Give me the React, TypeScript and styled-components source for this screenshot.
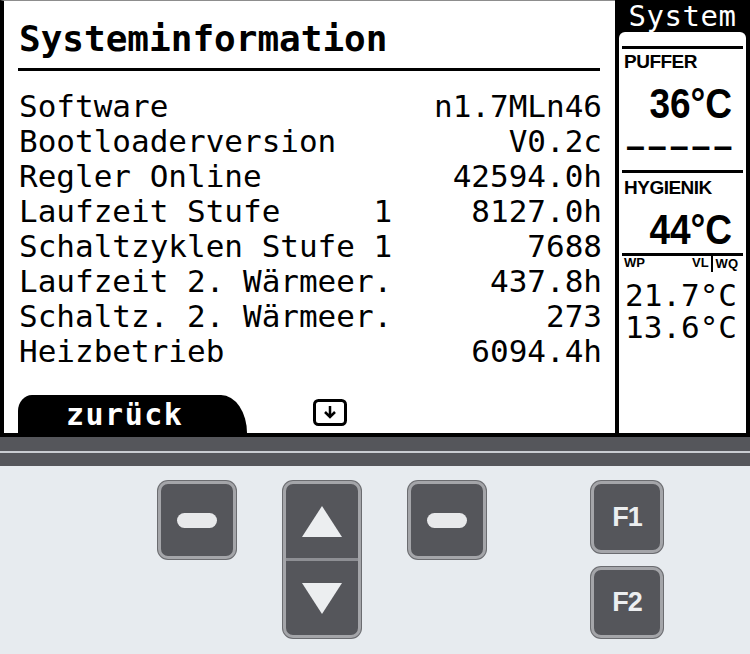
import React from 'react';
import styled, { createGlobalStyle } from 'styled-components';

const GlobalStyle = createGlobalStyle`
  *, *::before, *::after { box-sizing: border-box; }
  html, body { margin: 0; padding: 0; background: #e7ebef; }
  body { font-family: "DejaVu Sans Mono", monospace; }
`;

const Device = styled.div`
  width: 750px;
  height: 654px;
  display: flex;
  flex-direction: column;
  overflow: hidden;
`;

const Screen = styled.div`
  height: 437px;
  display: flex;
  background: #000;
`;

const MainPanel = styled.div`
  flex: 1;
  display: flex;
  flex-direction: column;
  background: #fff;
  color: #000;
  border-top: 1px solid #8d8d8d;
  border-left: 4px solid #000;
  border-bottom: 4px solid #000;
  padding: 20px 13px 0 15px;
`;

const Title = styled.h1`
  margin: 0;
  font: bold 36px/36px "DejaVu Sans Mono", monospace;
`;

const TitleRule = styled.div`
  height: 3px;
  background: #000;
  margin: 11px 2px 18px -1px;
`;

const InfoList = styled.div`
  display: flex;
  flex-direction: column;
`;

const InfoRow = styled.div`
  height: 35px;
  display: flex;
  justify-content: space-between;
  font: 31px/35px "DejaVu Sans Mono", monospace;
  white-space: pre;
`;

const Footer = styled.div`
  margin-top: auto;
  height: 38px;
  display: flex;
  align-items: flex-end;
`;

const BackTab = styled.div`
  width: 229px;
  height: 38px;
  margin-left: -1px;
  padding-left: 48px;
  background: #000;
  color: #fff;
  border-radius: 14px 26px 0 0 / 16px 38px 0 0;
  font: bold 30px/40px "DejaVu Sans Mono", monospace;
  letter-spacing: 1.5px;
`;

const ScrollHint = styled.svg`
  margin: 0 0 6px 66px;
`;

const SidePanel = styled.div`
  width: 135px;
  display: flex;
  flex-direction: column;
  background: #000;
  border-left: 4px solid #000;
  border-right: 4px solid #000;
  border-bottom: 4px solid #000;
`;

const SideHeader = styled.div`
  height: 32px;
  color: #fff;
  text-align: center;
  font: 29px/32px "DejaVu Sans Mono", monospace;
  letter-spacing: 0.5px;
  overflow: hidden;
`;

const SideBody = styled.div`
  flex: 1;
  display: flex;
  flex-direction: column;
  background: #fff;
  color: #000;
  border-radius: 6px 6px 0 0;
  padding: 14px 3px 0;
`;

const SideRule = styled.div<{ $gap: number }>`
  height: 3px;
  background: #000;
  margin-top: ${p => p.$gap}px;
`;

const SensorLabel = styled.div<{ $gap: number }>`
  margin-top: ${p => p.$gap}px;
  padding-left: 2px;
  font: bold 19px/19px "Liberation Sans", sans-serif;
  letter-spacing: -0.5px;
`;

const BigValue = styled.div`
  height: 40px;
  margin-top: 12px;
  padding-right: 11px;
  text-align: right;
  font: bold 43px/40px "Liberation Sans", sans-serif;
`;

const Condensed = styled.span`
  display: inline-block;
  transform: scaleX(0.86);
  transform-origin: right center;
`;

const Dashes = styled.div`
  height: 30px;
  margin-top: 9px;
  padding-left: 5px;
  font: bold 28px/30px "DejaVu Sans Mono", monospace;
  letter-spacing: 5px;
  white-space: nowrap;
`;

const SmallLabels = styled.div`
  height: 14px;
  display: flex;
  align-items: flex-start;
  padding: 0 5px 0 2px;
  font: bold 13px/14px "Liberation Sans", sans-serif;
`;

const SmallLabel = styled.span<{ $push?: boolean; $bar?: boolean }>`
  margin-left: ${p => (p.$push ? 'auto' : p.$bar ? '2px' : '0')};
  padding-left: ${p => (p.$bar ? '3px' : '0')};
  border-left: ${p => (p.$bar ? '2px solid #000' : 'none')};
  line-height: ${p => (p.$bar ? '16px' : '14px')};
`;

const Temps = styled.div`
  margin-top: 9px;
  display: flex;
  flex-direction: column;
`;

const TempLine = styled.div`
  height: 32px;
  padding-right: 6px;
  text-align: right;
  font: 31px/32px "DejaVu Sans Mono", monospace;
`;

const Divider = styled.div`
  height: 29px;
  background: linear-gradient(#55565b 0 14px, #c9ccd1 14px 16px, #55565b 16px 100%);
`;

const Controls = styled.div`
  flex: 1;
  display: flex;
  align-items: flex-start;
  gap: 47px;
  padding: 15px 0 0 158px;
  background: #e7ebef;
`;

const Key = styled.div<{ $w: number; $h: number }>`
  width: ${p => p.$w}px;
  height: ${p => p.$h}px;
  display: flex;
  align-items: center;
  justify-content: center;
  background: #55565b;
  border: 3px solid #a4a5a9;
  border-radius: 10px;
  box-shadow: 0 0 0 1px #6b6c70;
  color: #eceef0;
  font: bold 27px/1 "Liberation Sans", sans-serif;
  letter-spacing: -1px;
`;

const ArrowKey = styled(Key)`
  flex-direction: column;
  align-items: stretch;
`;

const ArrowHalf = styled.div<{ $split?: boolean }>`
  flex: 1;
  display: flex;
  align-items: center;
  justify-content: center;
  border-top: ${p => (p.$split ? '3px solid #8e8f94' : 'none')};
`;

const Pill = styled.div`
  width: 40px;
  height: 15px;
  border-radius: 8px;
  background: #e8e9eb;
`;

const FColumn = styled.div`
  margin-left: 58px;
  display: flex;
  flex-direction: column;
  gap: 14px;
`;

const rows: [string, string][] = [
  ['Software', 'n1.7MLn46'],
  ['Bootloaderversion', 'V0.2c'],
  ['Regler Online', '42594.0h'],
  ['Laufzeit Stufe     1', '8127.0h'],
  ['Schaltzyklen Stufe 1', '7688'],
  ['Laufzeit 2. Wärmeer.', '437.8h'],
  ['Schaltz. 2. Wärmeer.', '273'],
  ['Heizbetrieb', '6094.4h'],
];

const App: React.FC = () => {
  return (
    <Device>
      <GlobalStyle />
      <Screen>
        <MainPanel>
          <Title>Systeminformation</Title>
          <TitleRule />
          <InfoList>
            {rows.map(([label, value]) => (
              <InfoRow key={label}>
                <span>{label}</span>
                <span>{value}</span>
              </InfoRow>
            ))}
          </InfoList>
          <Footer>
            <BackTab>zurück</BackTab>
            <ScrollHint width="34" height="28" viewBox="0 0 34 28">
              <rect x="1.5" y="1.5" width="31" height="24" rx="4" fill="none" stroke="#000" strokeWidth="3" />
              <path d="M17 7 V18 M12 13 L17 18 L22 13" fill="none" stroke="#000" strokeWidth="2.5" />
            </ScrollHint>
          </Footer>
        </MainPanel>
        <SidePanel>
          <SideHeader>System</SideHeader>
          <SideBody>
            <SideRule $gap={0} />
            <SensorLabel $gap={3}>PUFFER</SensorLabel>
            <BigValue>
              <Condensed>36°C</Condensed>
            </BigValue>
            <Dashes>–––––</Dashes>
            <SideRule $gap={8} />
            <SensorLabel $gap={5}>HYGIENIK</SensorLabel>
            <BigValue>
              <Condensed>44°C</Condensed>
            </BigValue>
            <SideRule $gap={4} />
            <SmallLabels>
              <SmallLabel>WP</SmallLabel>
              <SmallLabel $push>VL</SmallLabel>
              <SmallLabel $bar>WQ</SmallLabel>
            </SmallLabels>
            <Temps>
              <TempLine>21.7°C</TempLine>
              <TempLine>13.6°C</TempLine>
            </Temps>
          </SideBody>
        </SidePanel>
      </Screen>
      <Divider />
      <Controls>
        <Key $w={78} $h={78}>
          <Pill />
        </Key>
        <ArrowKey $w={78} $h={157}>
          <ArrowHalf>
            <svg width="40" height="31" viewBox="0 0 40 31">
              <polygon points="20,0 40,31 0,31" fill="#eceef0" />
            </svg>
          </ArrowHalf>
          <ArrowHalf $split>
            <svg width="40" height="31" viewBox="0 0 40 31">
              <polygon points="0,0 40,0 20,31" fill="#eceef0" />
            </svg>
          </ArrowHalf>
        </ArrowKey>
        <Key $w={78} $h={78}>
          <Pill />
        </Key>
        <FColumn>
          <Key $w={72} $h={72}>F1</Key>
          <Key $w={72} $h={71}>F2</Key>
        </FColumn>
      </Controls>
    </Device>
  );
};

export default App;
